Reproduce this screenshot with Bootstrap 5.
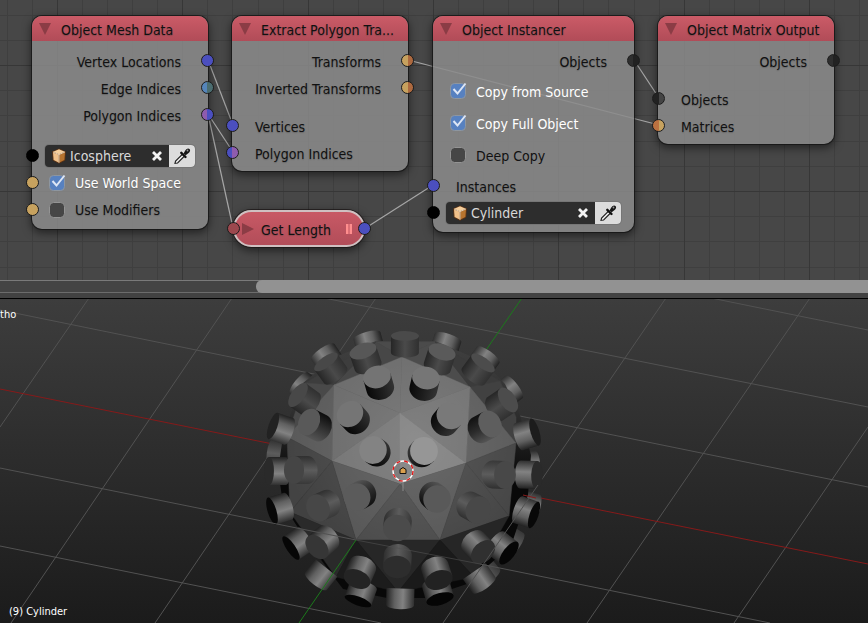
<!DOCTYPE html>
<html lang="en">
<head>
<meta charset="utf-8">
<meta name="viewport" content="width=device-width, initial-scale=1">
<title>Animation Nodes - Object Instancer</title>
<link href="https://cdn.jsdelivr.net/npm/bootstrap@5.3.0/dist/css/bootstrap.min.css" rel="stylesheet">
<style>
  body { font-family: "DejaVu Sans Condensed", "DejaVu Sans", sans-serif; font-size: 14px; line-height: 18px; background: #424242; color: #111; }
  .node-editor { height: 280px; background: #474747; }
  .canvas-art { inset: 0; }
  .grid-minor { stroke: #3f3f3f; }
  .grid-major { stroke: #373737; }
  .links line { stroke: #a6a6a6; stroke-width: 1.2; }

  .node { border-radius: 10px; background: rgba(139, 139, 139, .86); box-shadow: 0 0 0 1px rgba(20, 20, 20, .75), 0 3px 8px 1px rgba(0, 0, 0, .5); top: 16px; width: 176px; white-space: nowrap; }
  .node-wide { width: 201px; }
  .node-mesh { left: 32px; padding-bottom: 6px; }
  .node-extract { left: 232px; padding-bottom: 5px; }
  .node-instancer { left: 433px; padding-bottom: 6px; }
  .node-output { left: 658px; padding-bottom: 5px; }
  .node-head { height: 25px; padding-left: 6px; gap: 9px; border-radius: 10px 10px 0 0; background: linear-gradient(#cb5b67, #b14c58); }
  .node-body { padding-top: 6px; }
  .node-title { font-size: 14px; line-height: 18px; padding-top: 2px; }
  .twisty { width: 14px; height: 14px; padding: 0; border: 0; background: none; line-height: 0; }
  .twisty svg { fill: #8b3c45; }

  .node-row { height: 27px; padding: 3px 27px 0 23px; }
  .node-row, .node-title { text-shadow: 0 1px 1px rgba(60, 60, 60, .35); }
  .inputs-near { margin-top: 11px; }
  .inputs-far { margin-top: 14px; }
  .prop-row { height: 32px; }
  .prop-row, .check-row { padding: 0 0 0 16px; gap: 9px; }
  .prop-row label, .check-row label { padding-top: 1px; }
  .prop-group { padding: 1px 0; }
  .field-row { padding: 0 13px; }

  .socket { width: 13px; height: 13px; border-radius: 50%; border: 1px solid #1c1c1c; top: 7px; background: linear-gradient(90deg, var(--a) 50%, var(--b) 50%); }
  .socket-in { left: -6px; }
  .socket-out { right: -6px; }
  .s-vector { --a: #4b4fbf; --b: #4b4fbf; }
  .s-edge { --a: #5585ba; --b: #4b6d70; }
  .s-poly { --a: #8f5cae; --b: #4b4fbf; }
  .s-poly-in { --a: #4b4fbf; --b: #8f5cae; }
  .s-matrix { --a: #c7a25f; --b: #ad693f; }
  .s-matrix-in { --a: #bb7140; --b: #c7a25f; }
  .s-object { --a: #2f2f2f; --b: #222; }
  .s-object-in { --a: #222; --b: #444; }
  .s-bool { --a: #c7a25f; --b: #c7a25f; }
  .s-int { --a: #9c484e; --b: #9c484e; }
  .s-none { --a: #000; --b: #000; border-color: #000; }

  .tick { appearance: none; width: 18px; height: 18px; margin: 0; flex: none; background: url("data:image/svg+xml,%3Csvg xmlns='http://www.w3.org/2000/svg' viewBox='0 0 18 18'%3E%3Crect x='1.5' y='1.5' width='15' height='15' rx='4' fill='%23464646' stroke='%23949494'/%3E%3C/svg%3E"); }
  .tick:checked { background-image: url("data:image/svg+xml,%3Csvg xmlns='http://www.w3.org/2000/svg' viewBox='0 0 18 18'%3E%3Crect x='1.5' y='1.5' width='15' height='15' rx='4' fill='%235781c0' stroke='%238e969f'/%3E%3Cpath d='M4.5 7l4 4.500L16.500 1.500' fill='none' stroke='%23dde6f5' stroke-width='2'/%3E%3C/svg%3E"); }
  .tick:checked + label { color: #fff; }

  .picker { height: 22px; border-radius: 4px; background: #2d2d2d; box-shadow: 0 0 0 1px #767676; overflow: hidden; }
  .picker-icon { margin: 0 3px 0 6px; flex: none; }
  .picker input { border: 0; padding: 1px 0 0; background: none; color: #d8d8d8; width: 20px; min-width: 0; outline: 0; }
  .picker button { border: 0; padding: 0; width: 24px; height: 22px; background: none; line-height: 0; }
  .picker .dropper { background: #dcdcdc; width: 26px; }

  .node-pill { left: 233px; top: 210px; width: 132px; height: 37px; padding: 0 11px 0 6px; gap: 6px; border-radius: 19px; border: 2px solid #cfc0c1; background: linear-gradient(#c85965, #b24d59); box-shadow: 0 0 0 1px rgba(25, 20, 20, .7), 0 3px 8px 1px rgba(0, 0, 0, .5); white-space: nowrap; }
  .node-pill .socket { top: 10px; }
  .node-pill .socket-in { left: -8px; }
  .node-pill .socket-out { right: -8px; }

  .track { height: 13px; background: #444; border-top: 1px solid #7a7a7a; border-bottom: 1px solid #6c6c6c; }
  .thumb { margin-left: 256px; margin-top: -1px; height: 13px; border-radius: 6px 0 0 6px; background: #929292; }
  .splitter { height: 5px; background: #424242; border-bottom: 2px solid #000; box-sizing: content-box; margin-bottom: -1px; }

  .viewport { background: linear-gradient(#3d3d3d, #1b1b1b); min-height: 324px; color: #fff; font-size: 11px; line-height: 14px; }
  .view-name { left: 0; top: 9px; }
  .object-name { left: 9px; bottom: 4px; }
  .floor line { stroke: #525252; }
  .floor .axis-x { stroke: #861a1a; }
  .floor .axis-y { stroke: #1c7a1c; }
</style>
<script src="https://cdn.jsdelivr.net/npm/bootstrap@5.3.0/dist/js/bootstrap.bundle.min.js"></script>
</head>
<body class="d-flex flex-column min-vh-100 overflow-hidden">

<svg width="0" height="0" class="position-absolute" aria-hidden="true">
  <symbol id="i-down" viewBox="0 0 14 14"><path d="M1 1h12L7 13z"/></symbol>
  <symbol id="i-right" viewBox="0 0 14 14"><path d="M1 1v12l12-6z"/></symbol>
  <symbol id="i-cube" viewBox="0 0 16 16">
    <path d="M8 .5l7 3-.8 9L8 15.700l-6.200-3.200L1 3.500z" fill="#5b3315"/>
    <path d="M8 1.300l5.800 2.400L8 6.200 2.200 3.700z" fill="#f6cf9c"/>
    <path d="M2 4.500l5.600 2.300v7.800L2.600 12z" fill="#efc08a"/>
    <path d="M14 4.500L8.400 6.800v7.800l5-2.600z" fill="#b8742e"/>
    <path d="M2 4l6 2.600L14 4M8 6.600v8.200" fill="none" stroke="#ffe9cb" stroke-width=".8"/>
  </symbol>
  <symbol id="i-x" viewBox="0 0 12 12"><path d="M2 2l8 8M10 2l-8 8" stroke="#f4f4f4" stroke-width="2.800"/></symbol>
  <symbol id="i-dropper" viewBox="0 0 18 18">
    <path d="M2 16.300l.6-2.300 7-7 2 2-7 7z" fill="#f2f2f2" stroke="#222" stroke-width="1.200"/>
    <path d="M8.300 5.800l4.200 4.200" stroke="#111" stroke-width="2.400" stroke-linecap="round"/>
    <path d="M10.500 6.500l1.800-3c1.200-2 3-2.600 4.200-1.400s.6 3-1.200 4.200l-2.600 2z" fill="#161616"/>
    <circle cx="14.500" cy="3.500" r=".9" fill="#999"/>
  </symbol>
</svg>

<main class="node-editor position-relative overflow-hidden flex-shrink-0" aria-label="Node editor">
  <svg class="canvas-art position-absolute w-100 h-100" aria-hidden="true">
    <g id="grid" shape-rendering="crispEdges" fill="none"></g>
    <g class="links">
      <line x1="208" y1="60" x2="233" y2="125"/>
      <line x1="208" y1="114" x2="233" y2="152"/>
      <line x1="208" y1="114" x2="233" y2="228"/>
      <line x1="364" y1="229" x2="433" y2="185"/>
      <line x1="408" y1="60" x2="659" y2="125"/>
      <line x1="634" y1="60" x2="659" y2="98"/>
    </g>
  </svg>

  <section class="node node-mesh position-absolute">
    <div class="node-head d-flex align-items-center"><button class="twisty" aria-label="Collapse node"><svg width="14" height="14"><use href="#i-down"/></svg></button><h2 class="node-title m-0 fw-normal">Object Mesh Data</h2></div>
    <div class="node-body">
      <div class="node-row position-relative d-flex align-items-center justify-content-end">Vertex Locations<i class="socket socket-out s-vector position-absolute"></i></div>
      <div class="node-row position-relative d-flex align-items-center justify-content-end">Edge Indices<i class="socket socket-out s-edge position-absolute"></i></div>
      <div class="node-row position-relative d-flex align-items-center justify-content-end">Polygon Indices<i class="socket socket-out s-poly position-absolute"></i></div>
      <div class="inputs-far">
        <div class="node-row field-row position-relative d-flex align-items-center"><i class="socket socket-in s-none position-absolute"></i>
          <div class="picker d-flex align-items-center flex-grow-1">
            <svg class="picker-icon" width="16" height="16"><use href="#i-cube"/></svg>
            <input class="flex-grow-1" type="text" value="Icosphere" aria-label="Source object">
            <button aria-label="Clear"><svg width="12" height="12"><use href="#i-x"/></svg></button>
            <button class="dropper" aria-label="Pick object"><svg width="18" height="18"><use href="#i-dropper"/></svg></button>
          </div>
        </div>
        <div class="node-row check-row position-relative d-flex align-items-center"><i class="socket socket-in s-bool position-absolute"></i><input class="tick" type="checkbox" id="world" checked><label for="world">Use World Space</label></div>
        <div class="node-row check-row position-relative d-flex align-items-center"><i class="socket socket-in s-bool position-absolute"></i><input class="tick" type="checkbox" id="modifiers"><label for="modifiers">Use Modifiers</label></div>
      </div>
    </div>
  </section>

  <section class="node node-extract position-absolute">
    <div class="node-head d-flex align-items-center"><button class="twisty" aria-label="Collapse node"><svg width="14" height="14"><use href="#i-down"/></svg></button><h2 class="node-title m-0 fw-normal">Extract Polygon Tra...</h2></div>
    <div class="node-body">
      <div class="node-row position-relative d-flex align-items-center justify-content-end">Transforms<i class="socket socket-out s-matrix position-absolute"></i></div>
      <div class="node-row position-relative d-flex align-items-center justify-content-end">Inverted Transforms<i class="socket socket-out s-matrix position-absolute"></i></div>
      <div class="inputs-near">
        <div class="node-row position-relative d-flex align-items-center"><i class="socket socket-in s-vector position-absolute"></i>Vertices</div>
        <div class="node-row position-relative d-flex align-items-center"><i class="socket socket-in s-poly-in position-absolute"></i>Polygon Indices</div>
      </div>
    </div>
  </section>

  <section class="node node-wide node-instancer position-absolute">
    <div class="node-head d-flex align-items-center"><button class="twisty" aria-label="Collapse node"><svg width="14" height="14"><use href="#i-down"/></svg></button><h2 class="node-title m-0 fw-normal">Object Instancer</h2></div>
    <div class="node-body">
      <div class="node-row position-relative d-flex align-items-center justify-content-end">Objects<i class="socket socket-out s-object position-absolute"></i></div>
      <div class="prop-group">
        <div class="prop-row d-flex align-items-center"><input class="tick" type="checkbox" id="source" checked><label for="source">Copy from Source</label></div>
        <div class="prop-row d-flex align-items-center"><input class="tick" type="checkbox" id="full" checked><label for="full">Copy Full Object</label></div>
        <div class="prop-row d-flex align-items-center"><input class="tick" type="checkbox" id="deep"><label for="deep">Deep Copy</label></div>
      </div>
      <div class="node-row position-relative d-flex align-items-center"><i class="socket socket-in s-vector position-absolute"></i>Instances</div>
      <div class="node-row field-row position-relative d-flex align-items-center"><i class="socket socket-in s-none position-absolute"></i>
        <div class="picker d-flex align-items-center flex-grow-1">
          <svg class="picker-icon" width="16" height="16"><use href="#i-cube"/></svg>
          <input class="flex-grow-1" type="text" value="Cylinder" aria-label="Instanced object">
          <button aria-label="Clear"><svg width="12" height="12"><use href="#i-x"/></svg></button>
          <button class="dropper" aria-label="Pick object"><svg width="18" height="18"><use href="#i-dropper"/></svg></button>
        </div>
      </div>
    </div>
  </section>

  <section class="node node-output position-absolute">
    <div class="node-head d-flex align-items-center"><button class="twisty" aria-label="Collapse node"><svg width="14" height="14"><use href="#i-down"/></svg></button><h2 class="node-title m-0 fw-normal">Object Matrix Output</h2></div>
    <div class="node-body">
      <div class="node-row position-relative d-flex align-items-center justify-content-end">Objects<i class="socket socket-out s-object position-absolute"></i></div>
      <div class="inputs-near">
        <div class="node-row position-relative d-flex align-items-center"><i class="socket socket-in s-object-in position-absolute"></i>Objects</div>
        <div class="node-row position-relative d-flex align-items-center"><i class="socket socket-in s-matrix-in position-absolute"></i>Matrices</div>
      </div>
    </div>
  </section>

  <section class="node-pill position-absolute d-flex align-items-center">
    <i class="socket socket-in s-int position-absolute"></i>
    <button class="twisty" aria-label="Expand node"><svg width="14" height="14"><use href="#i-right"/></svg></button>
    <h2 class="node-title m-0 fw-normal flex-grow-1">Get Length</h2>
    <svg width="6" height="10" aria-hidden="true"><path d="M0 0h2v10H0zM4 0h2v10H4z" fill="#ff8e8e"/><path d="M2 0h2v10H2z" fill="#dd6f75"/></svg>
    <i class="socket socket-out s-vector position-absolute"></i>
  </section>
</main>

<div class="track flex-shrink-0"><div class="thumb"></div></div>
<div class="splitter flex-shrink-0"></div>

<section class="viewport position-relative flex-grow-1 overflow-hidden" aria-label="3D view">
  <svg class="canvas-art position-absolute w-100 h-100" viewBox="0 299 868 324" preserveAspectRatio="xMinYMin slice" aria-hidden="true">
    <defs>
      <linearGradient id="g-dark"><stop offset="0" stop-color="#080808"/><stop offset=".5" stop-color="#1c1c1c"/><stop offset="1" stop-color="#333"/></linearGradient>
      <linearGradient id="g-darkl"><stop offset="0" stop-color="#3a3a3a"/><stop offset=".5" stop-color="#202020"/><stop offset="1" stop-color="#080808"/></linearGradient>
      <linearGradient id="g-mid"><stop offset="0" stop-color="#262626"/><stop offset=".5" stop-color="#4a4a4a"/><stop offset="1" stop-color="#303030"/></linearGradient>
      <linearGradient id="g-shade"><stop offset="0" stop-color="#111"/><stop offset=".5" stop-color="#2c2c2c"/><stop offset="1" stop-color="#555"/></linearGradient>
      <linearGradient id="g-shadel"><stop offset="0" stop-color="#555"/><stop offset=".5" stop-color="#333"/><stop offset="1" stop-color="#0c0c0c"/></linearGradient>
      <linearGradient id="g-lite"><stop offset="0" stop-color="#303030"/><stop offset=".4" stop-color="#828282"/><stop offset=".7" stop-color="#606060"/><stop offset="1" stop-color="#222"/></linearGradient>
      <linearGradient id="g-soft"><stop offset="0" stop-color="#383838"/><stop offset=".5" stop-color="#5c5c5c"/><stop offset="1" stop-color="#303030"/></linearGradient>
      <linearGradient id="shell" gradientUnits="userSpaceOnUse" x1="0" y1="340" x2="0" y2="480"><stop offset="0" stop-color="#404040"/><stop offset=".5" stop-color="#303030"/><stop offset="1" stop-color="#080808"/></linearGradient>
      <radialGradient id="glow" gradientUnits="userSpaceOnUse" cx="415" cy="440" r="130"><stop offset="0" stop-color="#fff" stop-opacity=".12"/><stop offset="1" stop-color="#fff" stop-opacity="0"/></radialGradient>
    </defs>
    <g class="floor">
      <line x1="0" y1="310" x2="868" y2="487"/>
      <line x1="324" y1="298" x2="868" y2="407"/>
      <line x1="711" y1="298" x2="868" y2="330"/>
      <line x1="0" y1="546" x2="381" y2="623"/>
      <line x1="89" y1="298" x2="0" y2="427"/>
      <line x1="232" y1="298" x2="11" y2="623"/>
      <line x1="376" y1="298" x2="155" y2="623"/>
      <line x1="810" y1="298" x2="587" y2="623"/>
      <line x1="868" y1="427" x2="734" y2="623"/>
      <line x1="666" y1="298" x2="538" y2="485"/>
      <line class="axis-x" x1="0" y1="389" x2="868" y2="564"/>
      <line class="axis-y" x1="522" y1="298" x2="410" y2="460"/>
    </g>
    <g id="rim"></g>
    <g id="ball"></g>
    <g id="studs"></g>
    <g class="floor">
      <line x1="0" y1="468" x2="356" y2="540"/>
      <line x1="356" y1="540" x2="480" y2="564" opacity=".6"/>
      <line x1="480" y1="564" x2="770" y2="623"/>
      <line x1="538" y1="485" x2="443" y2="623"/>
      <line class="axis-x" x1="523" y1="495" x2="536" y2="498"/>
      <line class="axis-y" x1="356" y1="540" x2="299" y2="623"/>
    </g>
    <path d="M403 482v9M403 451v8" stroke="#8c8c8c"/>
    <circle cx="403" cy="471" r="10" fill="none" stroke="#fff" stroke-width="1.400"/>
    <circle cx="403" cy="471" r="10" fill="none" stroke="#e01818" stroke-width="1.400" stroke-dasharray="4 4"/>
    <path d="M403 467.500l3 2v4h-6v-4z" fill="#d9a04e" stroke="#111"/>
  </svg>
  <div class="view-name position-absolute">tho</div>
  <div class="object-name position-absolute">(9) Cylinder</div>
</section>

<script>
  // Node editor grid: every fifth line is darker.
  const wide = 3000, tall = 280;
  let minor = '', major = '';
  for (let i = -2; i < 120; i++) {
    const p = Math.round(57 + i * 376 / 15);
    const v = `M${p}.5 0V${tall}`;
    i % 5 === 0 ? major += v : minor += v;
  }
  for (let i = -2; i < 9; i++) {
    const p = Math.round(65 + i * 126 / 5);
    const h = `M0 ${p}.5H${wide}`;
    i % 5 === 0 ? major += h : minor += h;
  }
  document.getElementById('grid').innerHTML = `<path class="grid-minor" d="${minor}"/><path class="grid-major" d="${major}"/>`;

  // Icosphere: named vertices and flat-shaded faces.
  const V = {
    A: [402, 357], B: [334, 385], C: [470, 387], D: [400, 413], E: [332, 461], F: [466, 463],
    G: [287, 437], H: [516, 443], I: [400, 484], J: [356, 540], K: [440, 540], L: [290, 512],
    M: [509, 516], N: [398, 592], O: [336, 577], P: [474, 577], S: [376, 342], T: [435, 342],
    U: [305, 383], W: [500, 381], X: [516, 417]
  };
  const faces = [
    ['AST', '#4b4b4b'], ['ABS', '#474747'], ['ACT', '#4c4c4c'], ['BSU', '#3d3d3d'], ['BGU', '#494949'],
    ['CTW', '#3b3b3b'], ['CWXH', '#414141'], ['BEG', '#595959'], ['CFH', '#595959'],
    ['ABD', '#696969'], ['ACD', '#6a6a6a'], ['BDE', '#696969'], ['CDF', '#6f6f6f'],
    ['DEI', '#727272'], ['DFI', '#7d7d7d'], ['EGL', '#434343'], ['FHM', '#444444'],
    ['EIJ', '#555555'], ['FIK', '#565656'], ['IJK', '#4a4a4a'], ['EJL', '#414141'], ['FKM', '#444444'],
    ['JLO', '#2a2a2a'], ['KMP', '#262626'], ['JKN', '#272727'], ['JNO', '#1c1c1c'], ['KNP', '#1a1a1a']
  ];
  const outline = '376,341 435,341 484,362 505,384 520,415 531,455 528,495 513,540 497,558 467,584 425,598 387,598 343,589 327,568 300,531 283,504 278,470 284,430 303,383 335,357';
  const pts = k => [...k].map(c => V[c].join()).join(' ');
  document.getElementById('ball').innerHTML = `<polygon points="${outline}" fill="url(#shell)"/>` +
    faces.map(([k, c]) => `<polygon points="${pts(k)}" fill="${c}" stroke="${c}" stroke-width=".5"/>`).join('') +
    `<polygon points="402,357 470,387 516,443 509,516 440,540 356,540 290,512 287,437 334,385" fill="url(#glow)"/>`;

  // A stud stands on each face: end-cap centre, cap colour, side gradient.
  const cx = 404, cy = 471, R = 138, r = 14;
  function stud([x, y, cap, side, away]) {
    const dx = x - cx, dy = y - cy, d = Math.min(Math.hypot(dx, dy), R * .985);
    const nz = Math.pow(1 - d * d / R / R, .33), ry = r * (away ? .3 : nz), h = 17 * d / R;
    const turn = Math.atan2(dx, -dy) * 180 / Math.PI;
    const body = away
      ? `<path d="M${-r} 0V${h}H${r}V0A${r} ${ry} 0 0 0 ${-r} 0z" fill="url(#g-${side})"/>`
      : `<path d="M${-r} 0V${h}A${r} ${ry} 0 0 0 ${r} ${h}V0z" fill="url(#g-${side})"/><ellipse rx="${r}" ry="${ry}" fill="${cap}"/>`;
    return `<g transform="translate(${x} ${y}) rotate(${turn})">${body}</g>`;
  }
  const rim = [
    [367, 336, '#444', 'lite', 1], [448, 338, '#555', 'lite', 1], [323, 352, '#444', 'lite', 1], [488, 355, '#555', 'lite', 1],
    [299, 383, '#444', 'lite', 1], [514, 387, '#555', 'lite', 1], [536, 465, '#555', 'lite', 1], [271, 453, '#333', 'soft', 1],
    [536, 508, '#555', 'lite', 1], [516, 545, '#444', 'soft', 1], [489, 578, '#444', 'soft', 1]
  ];
  const studs = [
    [273, 426, '#222', 'lite'], [535, 432, '#1c1c1c', 'lite'], [269, 471, '#2a2a2a', 'lite'], [537, 475, '#2a2a2a', 'lite'],
    [272, 511, '#080808', 'lite'], [534, 515, '#080808', 'lite'], [291, 548, '#060606', 'lite'], [509, 553, '#060606', 'lite'],
    [316, 581, '#222', 'lite', 1], [484, 585, '#222', 'lite', 1], [358, 601, '#050505', 'lite'], [440, 599, '#050505', 'lite'],
    [400, 605, '#222', 'lite', 1],
    [405, 336, '#4a4a4a', 'mid'], [363, 351, '#575757', 'mid'], [442, 352, '#5a5a5a', 'mid'],
    [326, 362, '#484848', 'mid'], [483, 363, '#4c4c4c', 'mid'], [298, 395, '#484848', 'mid'], [508, 400, '#4c4c4c', 'mid'],
    [309, 422, '#595959', 'shadel'], [490, 424, '#5e5e5e', 'shade'], [294, 470, '#454545', 'soft'], [505, 475, '#484848', 'soft'],
    [318, 508, '#474747', 'soft'], [478, 510, '#484848', 'soft'], [317, 547, '#363636', 'lite'], [483, 552, '#303030', 'lite'],
    [357, 579, '#242424', 'lite'], [439, 580, '#222', 'lite'], [397, 567, '#2d2d2d', 'soft'], [397, 528, '#4b4b4b', 'soft'],
    [357, 497, '#5b5b5b', 'shade'], [437, 499, '#595959', 'shadel'], [377, 377, '#747474', 'dark'], [426, 378, '#767676', 'dark'],
    [350, 414, '#757575', 'dark'], [450, 416, '#797979', 'dark'], [373, 450, '#838383', 'dark'], [424, 451, '#969696', 'darkl']
  ];
  document.getElementById('rim').innerHTML = rim.map(stud).join('');
  document.getElementById('studs').innerHTML = studs.map(stud).join('');
</script>
</body>
</html>
